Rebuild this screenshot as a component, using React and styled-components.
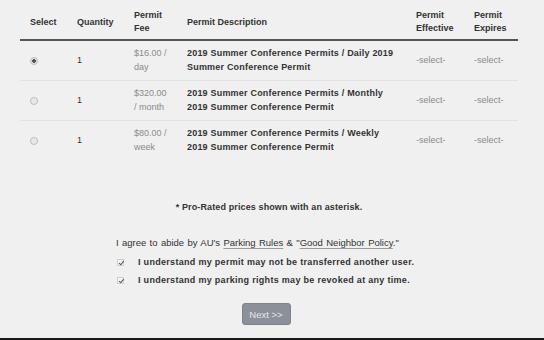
import styled, { createGlobalStyle } from 'styled-components';

const GlobalStyle = createGlobalStyle`
  html, body {
    margin: 0;
    padding: 0;
    background: #f0f0f0;
  }
  body {
    font-family: "Liberation Sans", Arial, sans-serif;
    color: #333;
  }
`;

const permits = [
  { fee: '$16.00 / day', desc: '2019 Summer Conference Permits / Daily 2019 Summer Conference Permit', checked: true },
  { fee: '$320.00 / month', desc: '2019 Summer Conference Permits / Monthly 2019 Summer Conference Permit' },
  { fee: '$80.00 / week', desc: '2019 Summer Conference Permits / Weekly 2019 Summer Conference Permit' },
];

const App = () => (
  <Page>
    <GlobalStyle />
    <Table>
      <colgroup>
        <col style={{ width: 47 }} />
        <col style={{ width: 57 }} />
        <col style={{ width: 53 }} />
        <col style={{ width: 229 }} />
        <col style={{ width: 58 }} />
        <col style={{ width: 54 }} />
      </colgroup>
      <thead>
        <tr>
          <Th>Select</Th>
          <Th>Quantity</Th>
          <Th>Permit<br />Fee</Th>
          <Th>Permit Description</Th>
          <Th>Permit<br />Effective</Th>
          <Th>Permit<br />Expires</Th>
        </tr>
      </thead>
      <tbody>
        {permits.map((p, i) => (
          <Row key={i} last={i === permits.length - 1}>
            <Td><Radio checked={p.checked} /></Td>
            <Td>1</Td>
            <Td muted>{p.fee}</Td>
            <Td bold>{p.desc}</Td>
            <Td muted>-select-</Td>
            <Td muted>-select-</Td>
          </Row>
        ))}
      </tbody>
    </Table>

    <Note>* Pro-Rated prices shown with an asterisk.</Note>

    <Agreement>
      <p className="agree__intro">
        I agree to abide by AU's <Link>Parking Rules</Link> &amp; "<Link>Good Neighbor Policy</Link>."
      </p>
      <CheckRow>
        <Check />
        I understand my permit may not be transferred another user.
      </CheckRow>
      <CheckRow>
        <Check />
        I understand my parking rights may be revoked at any time.
      </CheckRow>
    </Agreement>

    <Actions>
      <NextButton disabled>Next &gt;&gt;</NextButton>
    </Actions>
  </Page>
);

const Page = styled.div`
  box-sizing: border-box;
  height: 340px;
  padding: 5px 26px 0 20px;
  border-bottom: 2px solid #1a1a1a;
  font-size: 9px;
`;

const Table = styled.table`
  width: 498px;
  table-layout: fixed;
  border-collapse: collapse;
`;

const Th = styled.th`
  height: 34px;
  padding: 0 0 0 10px;
  text-align: left;
  vertical-align: middle;
  font-size: 9px;
  line-height: 13px;
  font-weight: bold;
  color: #333;
  border-bottom: 2px solid #555;
`;

const Row = styled.tr`
  border-bottom: ${(p) => (p.last ? 'none' : '1px solid #e2e2e2')};
`;

const Td = styled.td`
  height: 40px;
  box-sizing: border-box;
  padding: 0 10px;
  vertical-align: middle;
  font-size: 9px;
  line-height: 14px;
  font-weight: ${(p) => (p.bold ? 'bold' : 'normal')};
  letter-spacing: ${(p) => (p.bold ? '0.2px' : '0')};
  color: ${(p) => (p.muted ? '#8a8a8a' : '#333')};
`;

const Radio = styled.span`
  display: inline-block;
  box-sizing: border-box;
  width: 8px;
  height: 8px;
  border-radius: 50%;
  border: 1px solid #bdbdbd;
  background: ${(p) => (p.checked ? 'radial-gradient(circle, #555 0 1.6px, #e2e2e2 2px)' : '#e9e9e9')};
  vertical-align: middle;
`;

const Note = styled.p`
  margin: 42px 0 0;
  text-align: center;
  font-size: 9px;
  font-weight: bold;
  letter-spacing: 0.12px;
  color: #333;
`;

const Agreement = styled.div`
  margin: 24px 0 0 96px;

  .agree__intro {
    margin: 0 0 3px;
    font-size: 9.5px;
    line-height: 14px;
    word-spacing: 0.7px;
  }
`;

const Link = styled.span`
  text-decoration: underline;
  text-decoration-color: #9a9a9a;
  text-underline-offset: 2px;
`;

const CheckRow = styled.div`
  display: flex;
  align-items: center;
  gap: 14px;
  height: 18px;
  padding-left: 1px;
  font-size: 9px;
  font-weight: bold;
  letter-spacing: 0.3px;
`;

const Check = styled.span`
  position: relative;
  box-sizing: border-box;
  width: 7px;
  height: 7px;
  border: 1px solid #d0d0d0;
  background: #f4f4f4;
  flex: none;

  &::after {
    content: '';
    position: absolute;
    left: 1.5px;
    top: 0;
    width: 2px;
    height: 3.5px;
    border: solid #555;
    border-width: 0 1.2px 1.2px 0;
    transform: rotate(40deg);
  }
`;

const Actions = styled.div`
  display: flex;
  justify-content: center;
  margin-top: 14px;
  padding-right: 6px;
`;

const NextButton = styled.button`
  width: 49px;
  height: 22px;
  padding: 0;
  border: 1px solid #7d828b;
  border-radius: 3px;
  background: #8b9099;
  color: #e6e8ec;
  font-family: "Liberation Sans", Arial, sans-serif;
  font-size: 9.5px;
`;

export default App;
